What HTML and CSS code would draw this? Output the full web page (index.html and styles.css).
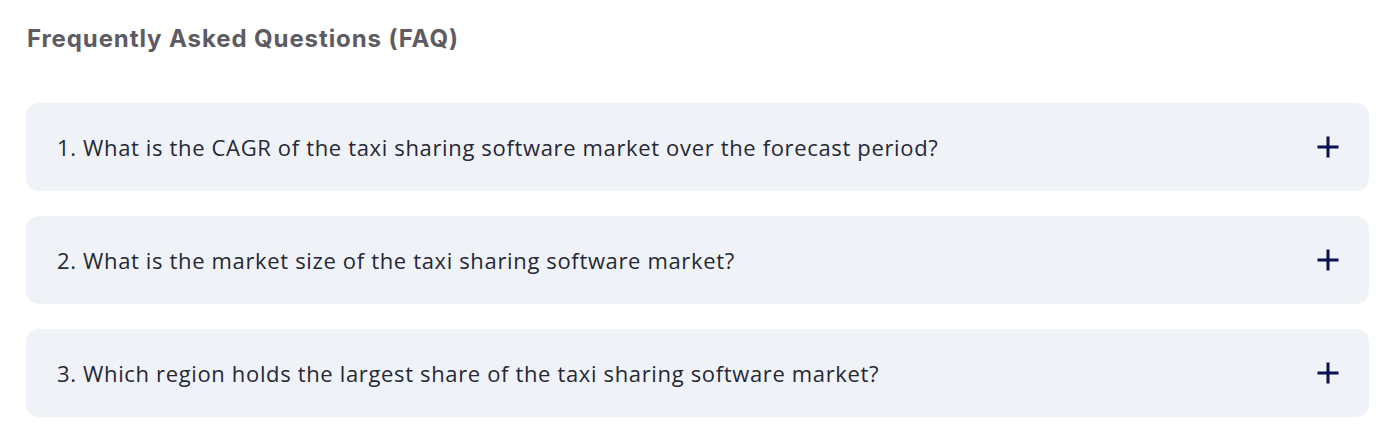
FILE: index.html
```html
<!DOCTYPE html>
<html lang="en">
<head>
<meta charset="utf-8">
<title>FAQ</title>
<link rel="stylesheet" href="styles.css">
</head>
<body>
<section class="faq">
  <h2 class="faq-title">Frequently Asked Questions (FAQ)</h2>
  <div class="faq-list">
    <div class="faq-item">
      <span class="faq-q">1. What is the CAGR of the taxi sharing software market over the forecast period?</span>
      <svg class="faq-icon" width="22" height="22" viewBox="0 0 22 22"><path d="M11 0.5V21.5M0.5 11H21.5" stroke="#0b1150" stroke-width="3"/></svg>
    </div>
    <div class="faq-item">
      <span class="faq-q">2. What is the market size of the taxi sharing software market?</span>
      <svg class="faq-icon" width="22" height="22" viewBox="0 0 22 22"><path d="M11 0.5V21.5M0.5 11H21.5" stroke="#0b1150" stroke-width="3"/></svg>
    </div>
    <div class="faq-item">
      <span class="faq-q">3. Which region holds the largest share of the taxi sharing software market?</span>
      <svg class="faq-icon" width="22" height="22" viewBox="0 0 22 22"><path d="M11 0.5V21.5M0.5 11H21.5" stroke="#0b1150" stroke-width="3"/></svg>
    </div>
  </div>
</section>
</body>
</html>
```
FILE: styles.css
```css
html, body {
  margin: 0;
  padding: 0;
  background: #ffffff;
}
.faq {
  padding: 24px 24px 0 26px;
}
.faq-title {
  margin: 0 0 49px 1px;
  font-family: "Inter", sans-serif;
  font-weight: 700;
  font-size: 24px;
  letter-spacing: 0.9px;
  line-height: 30px;
  color: #5e5b63;
}
.faq-list {
  display: flex;
  flex-direction: column;
  gap: 25px;
}
.faq-item {
  display: flex;
  align-items: center;
  justify-content: space-between;
  height: 88px;
  box-sizing: border-box;
  padding: 0 30px 1px 31px;
  background: #eff2f7;
  border-radius: 13px;
}
.faq-q {
  font-family: "Open Sans", sans-serif;
  font-size: 22px;
  letter-spacing: 0.65px;
  color: #262836;
}
.faq-icon {
  flex: none;
}
```
